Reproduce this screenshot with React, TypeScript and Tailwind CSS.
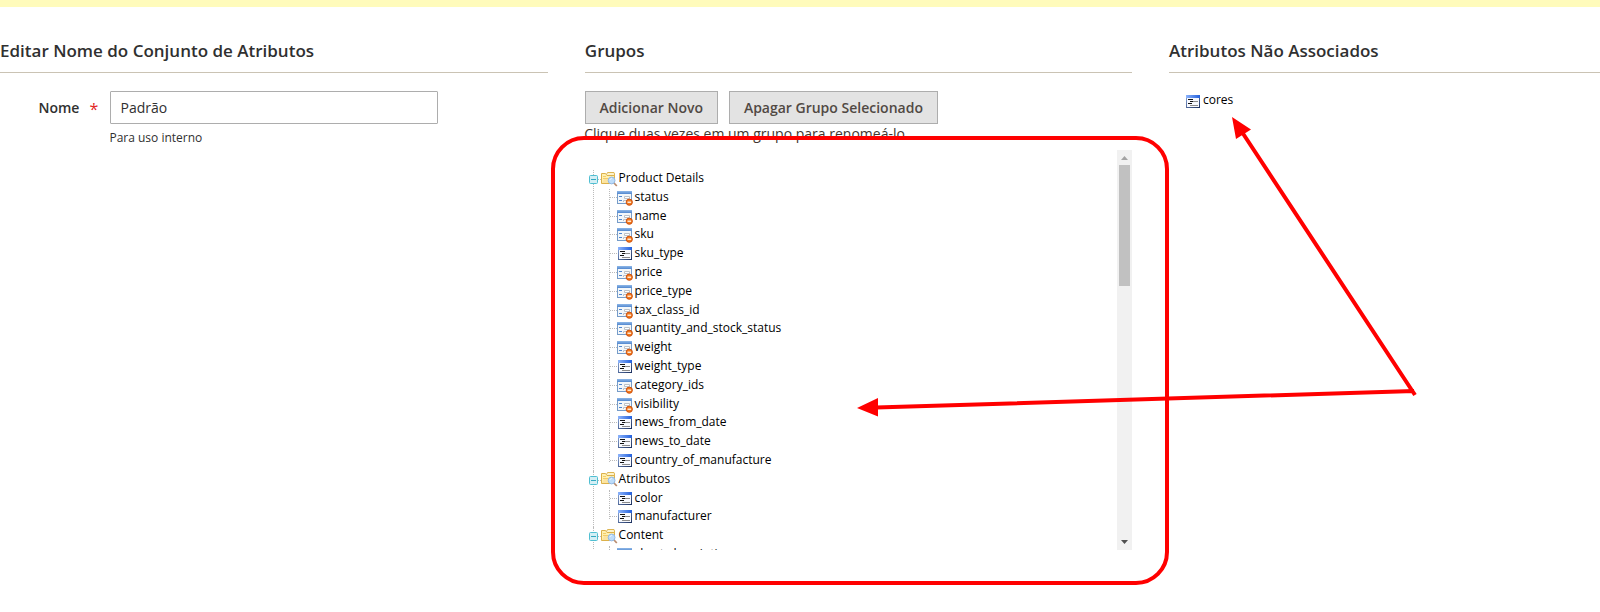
import type { ReactNode } from "react";

type Attribute = { name: string; required?: boolean };
type Group = { name: string; items: Attribute[] };

const groups: Group[] = [
  {
    name: "Product Details",
    items: [
      { name: "status", required: true },
      { name: "name", required: true },
      { name: "sku", required: true },
      { name: "sku_type" },
      { name: "price", required: true },
      { name: "price_type", required: true },
      { name: "tax_class_id", required: true },
      { name: "quantity_and_stock_status", required: true },
      { name: "weight", required: true },
      { name: "weight_type" },
      { name: "category_ids", required: true },
      { name: "visibility", required: true },
      { name: "news_from_date" },
      { name: "news_to_date" },
      { name: "country_of_manufacture" },
    ],
  },
  { name: "Atributos", items: [{ name: "color" }, { name: "manufacturer" }] },
  { name: "Content", items: [{ name: "short_description", required: true }] },
];

function PlainIcon() {
  return (
    <svg className="ml-px block h-[13px] w-[14px] shrink-0" viewBox="0 0 14 13">
      <defs>
        <linearGradient id="plainBar" x1="0" x2="1">
          <stop offset="0" stopColor="#8db4fb" />
          <stop offset="1" stopColor="#2360dc" />
        </linearGradient>
        <linearGradient id="plainEdge" x1="0" x2="1" y1="0" y2="1">
          <stop offset="0" stopColor="#8aa6d8" />
          <stop offset="1" stopColor="#1d3260" />
        </linearGradient>
      </defs>
      <rect x="0.5" y="0.5" width="13" height="12" fill="#f7f9fe" stroke="url(#plainEdge)" />
      <rect x="0" y="0" width="14" height="3" fill="url(#plainBar)" />
      <path d="M4 6.5h8M4 10.5h8" stroke="#8a8a8a" />
      <path d="M2 4.5h5M4 6.5h3M2 8.5h4" stroke="#111" />
    </svg>
  );
}

function RequiredIcon() {
  return (
    <svg className="block h-[15px] w-[16px] shrink-0" viewBox="0 0 16 15">
      <defs>
        <linearGradient id="reqBar" x1="0" x2="0" y1="0" y2="1">
          <stop offset="0" stopColor="#8fb8e8" />
          <stop offset="1" stopColor="#5187cf" />
        </linearGradient>
      </defs>
      <rect x="0.5" y="0.5" width="14" height="12" fill="#f3f7fa" stroke="#769cc9" />
      <rect x="0" y="0" width="15" height="3" fill="url(#reqBar)" />
      <path d="M2 5.5h3M2 9.5h3" stroke="#4f87d0" />
      <path d="M7.5 5.5h5v2h-5zM6.5 11V9.5h4" fill="#fff" stroke="#bcc1c7" />
      <circle cx="12.3" cy="11.2" r="3.1" fill="#f27a1d" stroke="#c94b0b" strokeWidth="0.9" />
      <path d="M10.5 11.2h3.6" stroke="#fff" strokeWidth="1.2" />
    </svg>
  );
}

function FolderIcon() {
  return (
    <svg className="block h-[15px] w-[17px] shrink-0" viewBox="0 0 17 15">
      <path d="M5.5 2.5l1-2h6.5l.5 1.5v8" fill="#fdf3cd" stroke="#ddb654" />
      <path d="M.5 11.5V1.5h4l1.5 2h7.5v8z" fill="#fff0b0" stroke="#dcb14a" />
      <path d="M2 4.5h3M2 6.5h7" stroke="#f3cd68" />
      <path d="M1 11l2-4h10.5v4z" fill="#fbe3a0" />
      <path d="M13 11l2.8 3" stroke="#b98d70" strokeWidth="1.8" />
      <circle cx="10.6" cy="8.5" r="3.4" fill="#bddcf9" stroke="#93b9e4" />
      <path d="M8.8 8q.6-1.5 2-1.5" fill="none" stroke="#eef8ff" />
    </svg>
  );
}

function Collapse() {
  return (
    <svg className="block h-[9px] w-[9px] shrink-0" viewBox="0 0 9 9">
      <rect x="0.5" y="0.5" width="8" height="8" rx="1" fill="#d4eff5" stroke="#50bfd2" />
      <path d="M2 4.5h5" stroke="#34a9c0" />
    </svg>
  );
}

function AttributeRow({ item, last }: { item: Attribute; last: boolean }) {
  return (
    <li className="flex h-[18.8px]">
      <div className={last ? "h-[10.5px] w-2 shrink-0 border-l border-dotted border-[#bbb]" : "w-2 shrink-0 border-l border-dotted border-[#bbb]"}>
        <div className="h-[9px] w-[7px] border-b border-dotted border-[#bbb]" />
      </div>
      <div className="w-4 shrink-0 pt-[2px]">{item.required ? <RequiredIcon /> : <PlainIcon />}</div>
      <span className="pl-[1.8px] leading-[16px]">{item.name}</span>
    </li>
  );
}

function TreeGroup({ group }: { group: Group }) {
  return (
    <li className="ml-2 border-l border-dotted border-[#bbb]">
      <div className="-ml-[5px] flex h-[18.8px]">
        <div className="w-[9px] pt-[5px]"><Collapse /></div>
        <div className="mt-[9px] h-px w-[3px] border-b border-dotted border-[#bbb]" />
        <div className="w-[17px] pt-[1.5px]"><FolderIcon /></div>
        <span className="pl-[0.8px] leading-[15px]">{group.name}</span>
      </div>
      <ul className="pl-[15px]">
        {group.items.map((item, i) => (
          <AttributeRow key={item.name} item={item} last={i === group.items.length - 1} />
        ))}
      </ul>
    </li>
  );
}

function Panel({ title, children }: { title: string; children: ReactNode }) {
  return (
    <section className="min-w-0">
      <h2 className="h-[41px] border-b border-[#cac3b4] text-[17px] leading-[38px] font-semibold">{title}</h2>
      {children}
    </section>
  );
}

function ActionButton({ children }: { children: ReactNode }) {
  return (
    <button className="h-[33px] border border-[#adadad] bg-[#e3e3e3] pr-[14.2px] pl-[13.7px] text-[14px] leading-[31px] font-semibold whitespace-nowrap text-[#514943]">
      {children}
    </button>
  );
}

function ScrollBar() {
  return (
    <div className="flex w-[15px] shrink-0 flex-col items-center bg-[#f1f1f1]">
      <svg className="h-[15px] w-[15px] shrink-0" viewBox="0 0 15 15"><path d="M4 10L7.5 6L11 10z" fill="#a3a3a3" /></svg>
      <div className="h-[121px] w-[11px] bg-[#c1c1c1]" />
      <svg className="mt-auto h-[15px] w-[15px] shrink-0" viewBox="0 0 15 15"><path d="M4 5L7.5 9L11 5z" fill="#505050" /></svg>
    </div>
  );
}

export default function App() {
  return (
    <main className="relative h-[612px] w-[1600px] overflow-hidden bg-white font-['Open_Sans','Noto_Sans',sans-serif] text-[14px] text-[#303030]">
      <div className="h-[7px] bg-[#fffbbb]" />
      <div className="grid grid-cols-[548px_547.4px_547px] gap-x-[36.8px] pt-[25px]">
        <Panel title="Editar Nome do Conjunto de Atributos">
          <div className="flex pt-[18px]">
            <label className="flex w-[110px] pl-[38.5px] leading-[33px] font-semibold">
              Nome<span className="pt-[2px] pl-[10px] text-[16px] font-normal text-[#e22626]">*</span>
            </label>
            <div>
              <input className="block h-[33px] w-[328px] rounded-[1px] border border-[#adadad] bg-white px-[9.5px] text-[14px] outline-none" defaultValue="Padrão" />
              <p className="-ml-[0.6px] pt-[5px] text-[12px] leading-[17px]">Para uso interno</p>
            </div>
          </div>
        </Panel>
        <Panel title="Grupos">
          <div className="flex gap-[11px] pt-[18px]">
            <ActionButton>Adicionar Novo</ActionButton>
            <ActionButton>Apagar Grupo Selecionado</ActionButton>
          </div>
          <p className="-ml-[0.6px] h-[26px] leading-[19px] text-[#41362f]">Clique duas vezes em um grupo para renomeá-lo.</p>
          <div className="flex h-[400px] overflow-hidden">
            <ul className="flex-1 pt-[20px] text-[12px] text-black">
              {groups.map((g) => (
                <TreeGroup key={g.name} group={g} />
              ))}
            </ul>
            <ScrollBar />
          </div>
        </Panel>
        <Panel title="Atributos Não Associados">
          <div className="flex pt-[18px] pl-4 text-[12px] leading-[18px] text-black">
            <div className="w-4 pt-[4px]"><PlainIcon /></div>
            <span className="pl-[2px]">cores</span>
          </div>
        </Panel>
      </div>
      <div className="pointer-events-none absolute top-[136px] left-[551px] h-[449px] w-[618px] rounded-[33px] border-4 border-[#ff0000]" />
      <svg className="pointer-events-none absolute inset-0 h-[612px] w-[1600px]" viewBox="0 0 1600 612">
        <path d="M1414 391L876 407.5M1415 395L1242 132" stroke="#f00" strokeWidth="4" fill="none" />
        <path d="M857 408L878 398V416.5zM1232 117L1251 129.5L1236 139z" fill="#f00" />
      </svg>
    </main>
  );
}
